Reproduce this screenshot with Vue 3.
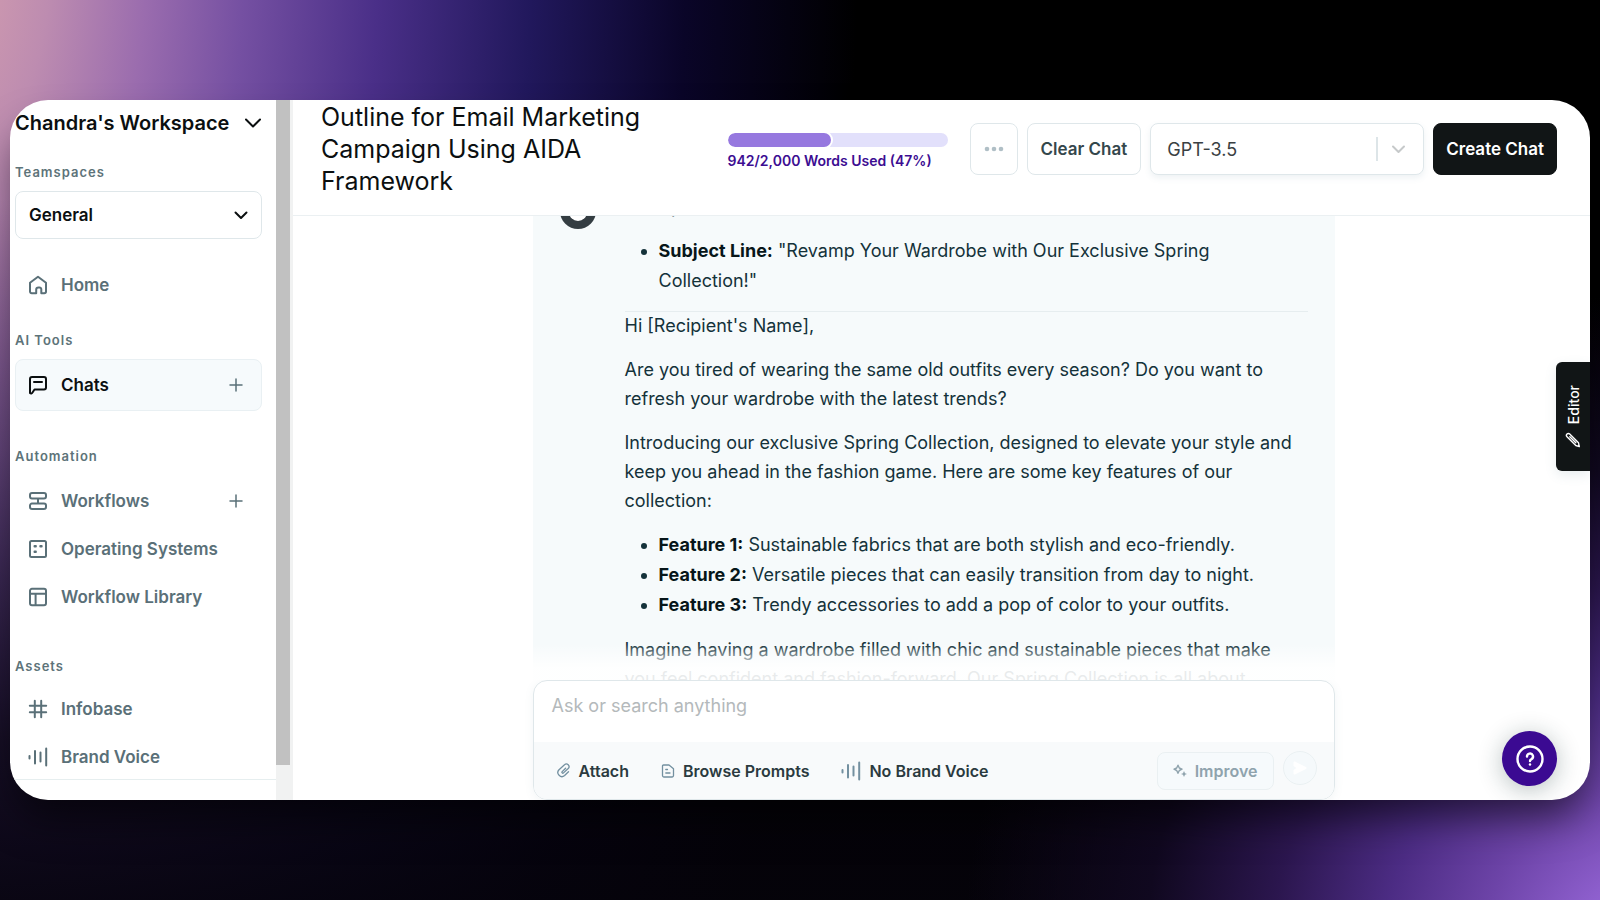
<script setup>
import { ref } from 'vue'

const draft = ref('')
const model = ref('GPT-3.5')
const team = ref('General')
const used = 942
const limit = 2000
const percent = Math.round((used / limit) * 100)

const sections = [
  { title: 'AI Tools', cls: 'tools', items: [{ label: 'Chats', icon: 'chat', add: true, active: true }] },
  {
    title: 'Automation',
    cls: 'automation',
    items: [
      { label: 'Workflows', icon: 'flow', add: true },
      { label: 'Operating Systems', icon: 'systems' },
      { label: 'Workflow Library', icon: 'library' },
    ],
  },
  {
    title: 'Assets',
    cls: 'assets',
    items: [
      { label: 'Infobase', icon: 'hash' },
      { label: 'Brand Voice', icon: 'voice' },
    ],
  },
]

const icons = {
  home: 'M2 7.800 10 1.800l8 6v8.700a1.700 1.700 0 0 1-1.700 1.700h-3v-4a1.800 1.800 0 0 0-1.800-1.800h-1a2.300 2.300 0 0 0-2.300 2.300v3.500H3.700A1.700 1.700 0 0 1 2 16.500z',
  chat: 'M2 18V4a2 2 0 0 1 2-2h12a2 2 0 0 1 2 2v8.500a2 2 0 0 1-2 2H6.500L4.500 17.500A1.500 1.500 0 0 1 2 18zM6 6.900h8',
  flow: 'M4 2h12a2 2 0 0 1 2 2v1.500a2 2 0 0 1-2 2H4a2 2 0 0 1-2-2V4a2 2 0 0 1 2-2zM4 12.500h12a2 2 0 0 1 2 2V16a2 2 0 0 1-2 2H4a2 2 0 0 1-2-2v-1.500a2 2 0 0 1 2-2zM10 7.500v5',
  systems: 'M3.500 2h13A1.500 1.500 0 0 1 18 3.500v13a1.500 1.500 0 0 1-1.500 1.500h-13A1.500 1.500 0 0 1 2 16.500v-13A1.500 1.500 0 0 1 3.500 2zM6.500 7h1.400M12.300 7h1.400M6.500 13h1.400M6.500 7.400h1.400M12.300 7.400h1.400M6.500 12.600h1.400',
  library: 'M4 1.800h12a2 2 0 0 1 2 2v12.400a2 2 0 0 1-2 2H4a2 2 0 0 1-2-2V3.800a2 2 0 0 1 2-2zM2 6.800h16M7.600 6.800v11.400',
  hash: 'M1.800 6.800h16.400M1.800 13.200h16.400M6.800 1.800v16.400M13.200 1.800v16.400',
  voice: 'M1.500 9v2.500M7 4v12.500M12.500 5.500v9M18.200 1.500v17',
}
</script>

<template>
  <div class="page">
    <div class="card">
      <aside class="sidebar">
        <div class="side-content">
          <button class="workspace" type="button">
            <span>Chandra's Workspace</span>
            <svg width="18" height="18" viewBox="0 0 18 18"><path d="M2 5.500l7 7 7-7" /></svg>
          </button>

          <label class="side-label" for="team">Teamspaces</label>
          <div class="team-box">
            <select id="team" v-model="team"><option>General</option></select>
            <svg class="arrow" width="14" height="14" viewBox="0 0 14 14"><path d="M1.500 4.500 7 10l5.500-5.500" /></svg>
          </div>

          <nav>
            <a class="item home" href="#">
              <svg class="icon" viewBox="0 0 20 20"><path :d="icons.home" /></svg>
              <span>Home</span>
            </a>
            <section v-for="s in sections" :key="s.title" :class="s.cls">
              <h2 class="side-label">{{ s.title }}</h2>
              <div v-for="i in s.items" :key="i.label" class="row" :class="{ active: i.active }">
                <a class="item" href="#">
                  <svg class="icon" viewBox="0 0 20 20"><path :d="icons[i.icon]" /></svg>
                  <span>{{ i.label }}</span>
                </a>
                <button v-if="i.add" class="add" type="button" :aria-label="'Add to ' + i.label">
                  <svg width="14" height="14" viewBox="0 0 14 14"><path d="M7 1v12M1 7h12" /></svg>
                </button>
              </div>
            </section>
          </nav>
          <div class="side-end"></div>
        </div>
        <div class="scrollbar"><div class="thumb"></div></div>
      </aside>

      <main class="main">
        <header class="header">
          <h1>Outline for Email Marketing Campaign Using AIDA Framework</h1>
          <div class="usage">
            <div class="bar"><div class="fill" :style="{ width: percent + '%' }"></div></div>
            <p>{{ used }}/2,000 Words Used ({{ percent }}%)</p>
          </div>
          <div class="actions">
            <button class="btn more" type="button" aria-label="More options">
              <svg width="20" height="6" viewBox="0 0 20 6"><circle cx="3" cy="3" r="2.300" /><circle cx="10" cy="3" r="2.300" /><circle cx="17" cy="3" r="2.300" /></svg>
            </button>
            <button class="btn" type="button">Clear Chat</button>
            <div class="model-box">
              <select v-model="model" aria-label="Model"><option>GPT-3.5</option></select>
              <svg class="arrow" width="36" height="24" viewBox="0 0 36 24"><path class="sep" d="M1 0v24" /><path d="M17 9.500l5.500 5.500L28 9.500" /></svg>
            </div>
            <button class="btn create" type="button">Create Chat</button>
          </div>
        </header>

        <div class="thread">
          <article class="message">
            <svg class="avatar" width="36" height="36" viewBox="0 0 36 36"><circle cx="18" cy="18" r="18" fill="#343d42" /><circle cx="18" cy="19" r="9" fill="#fff" /></svg>
            <div class="body">
              <p>Example:</p>
              <ul>
                <li><strong>Subject Line:</strong> "Revamp Your Wardrobe with Our Exclusive Spring Collection!"</li>
              </ul>
              <hr />
              <p>Hi [Recipient's Name],</p>
              <p>Are you tired of wearing the same old outfits every season? Do you want to refresh your wardrobe with the latest trends?</p>
              <p>Introducing our exclusive Spring Collection, designed to elevate your style and keep you ahead in the fashion game. Here are some key features of our collection:</p>
              <ul>
                <li><strong>Feature 1:</strong> Sustainable fabrics that are both stylish and eco-friendly.</li>
                <li><strong>Feature 2:</strong> Versatile pieces that can easily transition from day to night.</li>
                <li><strong>Feature 3:</strong> Trendy accessories to add a pop of color to your outfits.</li>
              </ul>
              <p>Imagine having a wardrobe filled with chic and sustainable pieces that make you feel confident and fashion-forward. Our Spring Collection is all about</p>
            </div>
          </article>
        </div>

        <form class="composer" @submit.prevent>
          <textarea v-model="draft" rows="1" placeholder="Ask or search anything" aria-label="Message"></textarea>
          <div class="tools-row">
            <button class="tool" type="button">
              <svg width="15" height="15" viewBox="0 0 15 15"><path d="M9.600 5.200 6.200 8.600a.9.900 0 0 0 1.300 1.300l4.700-4.400a2.600 2.600 0 0 0-3.700-3.700L3 6.800a4 4 0 0 0 5.600 5.700l3.900-3.800" /></svg>
              <span>Attach</span>
            </button>
            <button class="tool prompts" type="button">
              <svg width="14" height="14" viewBox="0 0 14 14"><path d="M2.500 1H8l4.500 3.800V11.500A1.500 1.500 0 0 1 11 13H3A1.500 1.500 0 0 1 1.500 11.500V2A1 1 0 0 1 2.500 1zM4.800 5.500h1.700M4.800 9h4.200" /></svg>
              <span>Browse Prompts</span>
            </button>
            <button class="tool voice" type="button">
              <svg width="20" height="20" viewBox="0 0 20 20"><path :d="icons.voice" /></svg>
              <span>No Brand Voice</span>
            </button>
            <button class="improve" type="button" disabled>
              <svg width="14" height="14" viewBox="0 0 14 14"><path d="M5 1.200 6.300 4 9 5.200 6.300 6.500 5 9.300 3.700 6.500 1 5.200 3.700 4z" /><path class="solid" d="M11 7l1 2.200 2 .8-2 .8-1 2.200-1-2.200-2-.8 2-.8z" /></svg>
              <span>Improve</span>
            </button>
            <button class="send" type="submit" disabled aria-label="Send">
              <svg width="16" height="16" viewBox="0 0 16 16"><path d="M2.500 2.500 13.500 8 2.500 13.500 2.500 10.500 6 8 2.500 5.500z" /></svg>
            </button>
          </div>
        </form>
      </main>

      <button class="editor" type="button">
        <svg width="16" height="16" viewBox="0 0 16 16"><path d="M14.300 14.600 10.800 13.500 2 4.700A1.900 1.900 0 0 1 4.700 2L13.500 10.800zM4.800 4.800l6 6" /></svg>
        <span>Editor</span>
      </button>
      <button class="help" type="button" aria-label="Help">
        <svg width="28" height="28" viewBox="0 0 28 28"><circle cx="14" cy="14" r="12.500" /><path d="M11 11.600a3 3 0 1 1 4.500 2.500c-1 .5-1.500 1-1.500 1.900" /><path d="M14 19.400v.2" /></svg>
      </button>
    </div>
  </div>
</template>

<style>
body {
  margin: 0;
  background: #000;
}
</style>

<style scoped>
.page,
.page * {
  box-sizing: border-box;
}
.page {
  height: 100vh;
  min-height: 600px;
  padding: 100px 10px;
  font-family: Inter, "Liberation Sans", sans-serif;
  color: #0b0f10;
  background:
    radial-gradient(ellipse 700px 660px at 104% 106%, #a273e4 0%, #9061d0 12%, #6d44a8 26%, #4c2c84 40%, #2b164e 56%, #10081f 74%, transparent 100%),
    linear-gradient(transparent 0%, transparent 22%, rgba(5, 3, 10, 0.3) 50%, rgba(5, 3, 10, 0.8) 82%, rgba(5, 3, 10, 0.92) 100%),
    radial-gradient(ellipse 960px 2000px at -4% -6%, #dca4ae 0%, #bd8cb0 12%, #9a6cae 22%, #7550a2 32%, #4a2f88 46%, #21185c 62%, #0a0528 78%, #000 96%);
}
.card {
  position: relative;
  display: flex;
  height: 100%;
  overflow: hidden;
  background: #fff;
  border-radius: 38px;
  box-shadow: 0 24px 40px -8px rgba(0, 0, 0, 0.6);
}
button,
select,
textarea {
  margin: 0;
  padding: 0;
  border: 0;
  background: none;
  font: inherit;
  color: inherit;
}
svg {
  display: block;
  flex: none;
  fill: none;
  stroke: currentColor;
  stroke-width: 2;
  stroke-linecap: round;
  stroke-linejoin: round;
}
h1,
h2,
p,
ul {
  margin: 0;
}

/* sidebar */
.sidebar {
  display: flex;
  flex: none;
  width: 283px;
}
.side-content {
  flex: 1;
  display: flex;
  flex-direction: column;
  padding: 8px 14px 20px 5px;
}
.workspace {
  display: flex;
  align-items: center;
  justify-content: space-between;
  height: 34px;
  font-size: 20px;
  font-weight: 600;
}
.side-label {
  display: block;
  font-size: 13px;
  line-height: 16px;
  font-weight: 600;
  letter-spacing: 1px;
  color: #5d7379;
}
.side-label[for] {
  margin-top: 27px;
}
.team-box {
  position: relative;
  margin-top: 11px;
}
.team-box select {
  appearance: none;
  display: block;
  width: 100%;
  height: 48px;
  padding: 0 13px;
  border: 1px solid #dfe7ea;
  border-radius: 8px;
  font-size: 17px;
  font-weight: 600;
}
.arrow {
  position: absolute;
  pointer-events: none;
}
.team-box .arrow {
  right: 14px;
  top: 17px;
}
.item {
  flex: 1;
  display: flex;
  align-items: center;
  gap: 13px;
  padding-left: 13px;
  color: inherit;
  font-size: 17px;
  font-weight: 600;
  text-decoration: none;
}
.icon {
  width: 20px;
  height: 20px;
}
nav {
  color: #5a7078;
}
.home {
  height: 48px;
  margin-top: 22px;
}
.row {
  display: flex;
  align-items: center;
  height: 48px;
}
.row.active {
  height: 52px;
  color: #0b0f10;
  background: #f6fafc;
  border: 1px solid #e9f0f3;
  border-radius: 8px;
}
.row.active .item {
  padding-left: 12px;
}
.add {
  padding: 6px 19px;
  color: #5a7078;
}
.active .add {
  padding-right: 18px;
}
.add svg {
  stroke-width: 1.5;
}
.tools {
  margin-top: 23px;
}
.tools .side-label {
  margin-bottom: 11px;
}
.automation {
  margin-top: 37px;
}
.automation .side-label {
  margin-bottom: 13px;
}
.assets {
  margin-top: 37px;
}
.assets .side-label {
  margin-bottom: 11px;
}
.side-end {
  margin: -2px -14px 0 -5px;
  border-top: 1px solid #e6eeef;
}
.scrollbar {
  width: 17px;
  padding: 0 3px 0 0;
  background: #f1f2f2;
}
.thumb {
  height: 95%;
  background: #c1c1c1;
}

/* header */
.main {
  flex: 1;
  min-width: 0;
  display: flex;
  flex-direction: column;
}
.header {
  flex: none;
  display: flex;
  align-items: center;
  padding: 1px 33px 18px 28px;
  border-bottom: 1px solid #ebf0f2;
}
h1 {
  max-width: 340px;
  font-size: 25px;
  line-height: 32px;
  font-weight: 400;
}
.usage {
  width: 220px;
  margin-left: auto;
  margin-right: 22px;
  padding-top: 4px;
}
.bar {
  height: 14px;
  border-radius: 7px;
  background: #e2e0fb;
  overflow: hidden;
}
.fill {
  height: 100%;
  border-radius: 7px;
  background: #9678df;
  box-shadow: 0 0 0 2px #fff;
}
.usage p {
  margin-top: 5px;
  font-size: 14px;
  line-height: 18px;
  font-weight: 600;
  color: #3c0d92;
  white-space: nowrap;
}
.actions {
  display: flex;
  gap: 9px;
}
.btn {
  height: 52px;
  padding: 0 13px;
  border: 1px solid #dfe7ea;
  border-radius: 8px;
  font-size: 17px;
  font-weight: 600;
  color: #34474c;
  white-space: nowrap;
}
.more {
  color: #b0bfc6;
}
.more svg {
  fill: currentColor;
  stroke: none;
}
.create {
  padding: 0 12px;
  border-color: #111516;
  background: #111516;
  color: #fff;
}
.model-box {
  position: relative;
  width: 274px;
}
.model-box select {
  appearance: none;
  width: 100%;
  height: 52px;
  padding: 0 16px;
  border: 1px solid #dfe7ea;
  border-radius: 8px;
  box-shadow: 0 3px 6px rgba(90, 130, 145, 0.1);
  background: #fff;
  font-size: 18px;
  color: #3a4042;
}
.model-box .arrow {
  right: 12px;
  top: 14px;
  color: #c6c9ca;
}
.arrow .sep {
  stroke: #dde5e8;
}

/* conversation */
.thread {
  position: relative;
  flex: 1;
  min-height: 0;
  display: flex;
  flex-direction: column;
  justify-content: flex-end;
  padding-right: 16px;
  overflow: hidden;
}
.thread::after {
  content: "";
  position: absolute;
  left: 0;
  right: 0;
  bottom: 0;
  height: 36px;
  background: linear-gradient(rgba(255, 255, 255, 0), rgba(255, 255, 255, 0.9) 65%);
}
.message {
  flex: none;
  display: flex;
  gap: 29px;
  width: 802px;
  margin: 0 auto -13px;
  padding: 0 27px;
  background: #f6fafb;
}
.avatar {
  margin-top: 1px;
  stroke: none;
}
.body {
  flex: 1;
  display: flex;
  flex-direction: column;
  gap: 15px;
  font-size: 18px;
  line-height: 29px;
  color: #14323a;
}
.body p {
  padding-right: 6px;
}
ul {
  padding-left: 34px;
  line-height: 30px;
}
strong {
  color: #071619;
}
hr {
  width: 100%;
  margin: 0 0 -16px;
  border: 0;
  border-top: 1px solid #e6edef;
}

/* composer */
.composer {
  flex: none;
  align-self: center;
  width: 802px;
  margin-right: 16px;
  border: 1px solid #dfe7ea;
  border-radius: 14px;
  overflow: hidden;
  box-shadow: 0 2px 10px rgba(90, 130, 145, 0.08);
}
textarea {
  display: block;
  width: 100%;
  height: 61px;
  padding: 12px 18px;
  font-size: 18px;
  line-height: 26px;
  resize: none;
}
textarea::placeholder {
  color: #b4b9bb;
}
.tools-row {
  display: flex;
  align-items: center;
  height: 57px;
  padding: 0 17px 0 22px;
  background: #f8fafb;
  color: #2b3a3f;
  font-size: 16px;
  font-weight: 600;
}
.tool,
.improve {
  display: flex;
  align-items: center;
  gap: 8px;
  white-space: nowrap;
}
.tool svg {
  color: #7390a0;
  stroke-width: 1.3;
}
.prompts,
.voice {
  margin-left: 32px;
}
.tool.voice svg {
  stroke-width: 2;
}
.improve {
  height: 38px;
  margin-left: auto;
  padding: 0 15px;
  border: 1px solid #eaf0f2;
  border-radius: 8px;
  background: #f6fafc;
  color: #8fa3ad;
}
.improve svg {
  stroke-width: 1.4;
}
.improve .solid {
  fill: currentColor;
  stroke: none;
}
.send {
  align-self: flex-start;
  display: grid;
  place-items: center;
  width: 34px;
  height: 34px;
  margin: 9px 0 0 9px;
  border: 1px solid #eaf0f2;
  border-radius: 50%;
  background: #f5f9fb;
  color: #fff;
}
.send svg {
  fill: #fff;
}

/* floating controls */
.editor {
  position: absolute;
  right: 0;
  top: 262px;
  display: flex;
  flex-direction: column-reverse;
  align-items: center;
  justify-content: center;
  gap: 8px;
  width: 34px;
  height: 109px;
  border-radius: 6px 0 0 6px;
  background: #111516;
  color: #fff;
  font-size: 14px;
  font-weight: 500;
  box-shadow: 0 4px 12px rgba(90, 130, 145, 0.14);
}
.editor span {
  writing-mode: vertical-rl;
  rotate: 180deg;
}
.editor svg {
  stroke-width: 1.4;
}
.help {
  position: absolute;
  right: 33px;
  bottom: 14px;
  display: grid;
  place-items: center;
  width: 55px;
  height: 55px;
  border-radius: 50%;
  background: #3b0a92;
  color: #fff;
  box-shadow: 0 4px 24px rgba(20, 50, 50, 0.3);
}
.help svg {
  stroke-width: 2.4;
}
</style>
